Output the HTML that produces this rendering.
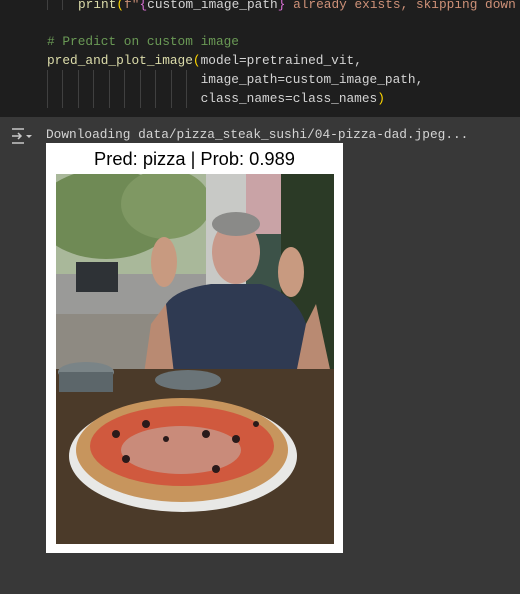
<!DOCTYPE html>
<html><head><style>
body{margin:0;width:520px;height:594px;background:#383838;overflow:hidden;font-family:"Liberation Mono",monospace;font-size:12.8px;position:relative}
.code{position:absolute;left:0;top:0;width:520px;height:117px;background:#1e1e1e}
.l{position:absolute;left:47px;white-space:pre;color:#d4d4d4;line-height:19px}
.g{position:absolute;width:1px;background:#404040}
.c{color:#6a9955}.y{color:#ffd700}.p{color:#da70d6}.s{color:#ce9178}.f{color:#dcdcaa}
.out{position:absolute;left:46px;top:125px;color:#d4d4d4;white-space:pre;line-height:19px}
.box{position:absolute;left:46px;top:143px;width:297px;height:410px;background:#fff}
.t{position:absolute;left:0;width:297px;top:5px;text-align:center;font-family:"Liberation Sans",sans-serif;font-size:18.3px;color:#000}
svg{position:absolute;left:10px;top:31px}
</style></head><body>
<div class="code">
<div class="l" style="top:-5px;left:78px"><span class="f">print</span><span class="y">(</span><span class="s">f"</span><span class="p">{</span>custom_image_path<span class="p">}</span><span class="s"> already exists, skipping down</span></div>
<div class="l c" style="top:32px"># Predict on custom image</div>
<div class="l" style="top:51px"><span class="f">pred_and_plot_image</span><span class="y">(</span>model=pretrained_vit,</div>
<div class="l" style="top:70px">                    image_path=custom_image_path,</div>
<div class="l" style="top:89px">                    class_names=class_names<span class="y">)</span></div>
<div class="g" style="left:47px;top:0;height:10px"></div><div class="g" style="left:62px;top:0;height:10px"></div>
<div class="g" style="left:47px;top:70px;height:38px"></div><div class="g" style="left:62px;top:70px;height:38px"></div>
<div class="g" style="left:78px;top:70px;height:38px"></div><div class="g" style="left:93px;top:70px;height:38px"></div>
<div class="g" style="left:109px;top:70px;height:38px"></div><div class="g" style="left:124px;top:70px;height:38px"></div>
<div class="g" style="left:140px;top:70px;height:38px"></div><div class="g" style="left:155px;top:70px;height:38px"></div>
<div class="g" style="left:171px;top:70px;height:38px"></div><div class="g" style="left:186px;top:70px;height:38px"></div>
</div>
<svg style="left:11px;top:127px" width="22" height="18" viewBox="0 0 22 18"><g stroke="#c8c8c8" stroke-width="1.5" fill="none"><path d="M1 2h12M1 16h12M1 9h9M7 6l3 3-3 3"/></g><path d="M15 8h6l-3 3z" fill="#c8c8c8"/></svg>
<div class="out">Downloading data/pizza_steak_sushi/04-pizza-dad.jpeg...</div>
<div class="box"><div class="t">Pred: pizza | Prob: 0.989</div>
<svg width="278" height="370" viewBox="0 0 278 370">
<rect width="278" height="370" fill="#4a3a28"/>
<rect width="150" height="140" fill="#a9b89a"/>
<ellipse cx="50" cy="40" rx="70" ry="45" fill="#6f8a55"/>
<ellipse cx="110" cy="30" rx="45" ry="35" fill="#7f9863"/>
<rect x="0" y="100" width="150" height="45" fill="#9a9a98"/>
<rect x="20" y="88" width="42" height="30" fill="#2e3236"/>
<rect x="150" y="0" width="128" height="145" fill="#c8c9c6"/>
<rect x="190" y="0" width="88" height="80" fill="#c9a3a6"/>
<rect x="190" y="60" width="50" height="80" fill="#3c5248"/>
<rect x="225" y="0" width="53" height="200" fill="#2b3a26"/>
<rect x="0" y="140" width="160" height="55" fill="#8e8a82"/>
<path d="M110 130 Q120 115 155 110 L205 110 Q240 120 250 150 L250 200 L110 200 Z" fill="#2f3a52"/>
<path d="M88 200 L95 150 L110 130 L118 200Z" fill="#b98a72"/>
<path d="M240 200 L250 150 L260 130 L275 200Z" fill="#b98a72"/>
<ellipse cx="108" cy="88" rx="13" ry="25" fill="#c89a80"/>
<ellipse cx="235" cy="98" rx="13" ry="25" fill="#c89a80"/>
<ellipse cx="180" cy="78" rx="24" ry="32" fill="#c8998a"/>
<ellipse cx="180" cy="50" rx="24" ry="12" fill="#8a8a88"/>
<rect x="0" y="195" width="278" height="175" fill="#4b3a29"/>
<ellipse cx="30" cy="198" rx="28" ry="10" fill="#7a8487"/>
<rect x="3" y="198" width="54" height="20" fill="#5c666a"/>
<ellipse cx="132" cy="206" rx="33" ry="10" fill="#6a7478"/>
<ellipse cx="127" cy="282" rx="114" ry="56" fill="#e8e8e6"/>
<ellipse cx="126" cy="276" rx="106" ry="52" fill="#c7955d"/>
<ellipse cx="126" cy="272" rx="92" ry="40" fill="#d0593e"/>
<ellipse cx="125" cy="276" rx="60" ry="24" fill="#c98b7a"/>
<g fill="#2a1a1a"><circle cx="60" cy="260" r="4"/><circle cx="90" cy="250" r="4"/><circle cx="150" cy="260" r="4"/><circle cx="180" cy="265" r="4"/><circle cx="70" cy="285" r="4"/><circle cx="160" cy="295" r="4"/><circle cx="110" cy="265" r="3"/><circle cx="200" cy="250" r="3"/></g>
</svg></div>
</body></html>
